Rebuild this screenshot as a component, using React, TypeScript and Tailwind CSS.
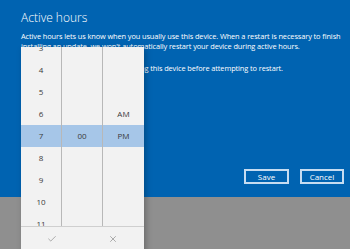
import React from 'react';
import { Check, X } from 'lucide-react';

const hours = ['3', '4', '5', '6', '7', '8', '9', '10', '11'];
const selected = 4;

const TimePicker: React.FC = () => {
    const minutes = hours.map((_, i) => (i === selected ? '00' : ''));
    const period = hours.map((_, i) => (i === selected - 1 ? 'AM' : i === selected ? 'PM' : ''));
    const columns = [hours, minutes, period];

    return (
        <div className="absolute left-[21px] top-[47px] w-[123px] bg-[#f2f2f2] shadow-[2px_2px_6px_rgba(0,0,0,0.25)] text-[8px] text-[#3a3a3a]">
            <div className="h-[179px] overflow-hidden">
                <div className="grid grid-cols-3 -mt-[10px]">
                    {columns.map((col, c) => (
                        <div key={c} className={c < 2 ? 'border-r border-[#b8b8b8]' : ''}>
                            {col.map((value, i) => (
                                <div
                                    key={i}
                                    className={`h-[22px] flex items-center justify-center ${i === selected ? 'bg-[#a6c6e8]' : ''}`}
                                >
                                    {value}
                                </div>
                            ))}
                        </div>
                    ))}
                </div>
            </div>
            <div className="grid grid-cols-2 h-[30px] border-t border-[#cfcfcf] text-[#555]">
                <div className="flex items-center justify-center pb-[6px]">
                    <Check size={10} strokeWidth={1.1} />
                </div>
                <div className="flex items-center justify-center pb-[6px]">
                    <X size={10} strokeWidth={1.1} />
                </div>
            </div>
        </div>
    );
};

const App: React.FC = () => {
    return (
        <div className="relative w-[350px] h-[249px] overflow-hidden bg-[#8f8f8f] font-['Open_Sans',sans-serif]">
            <div className="h-[197px] bg-[#0063b1] text-white pl-[21px] pr-[6px] flex flex-col">
                <h1 className="mt-[10px] text-[12px] leading-[16px] font-light">Active hours</h1>
                <p className="mt-[5px] text-[7.4px] leading-[10px] whitespace-nowrap tracking-[-0.1px]">
                    Active hours lets us know when you usually use this device. When a restart is necessary to finish
                    <br />
                    installing an update, we won't automatically restart your device during active hours.
                </p>
                <p className="mt-[12px] text-[7.4px] leading-[10px] whitespace-nowrap tracking-[-0.1px]">
                    Note: We'll check to see if you're using this device before attempting to restart.
                </p>
                <div className="mt-auto mb-[13px] flex justify-end gap-[11px] text-[8px]">
                    <button className="w-[45px] h-[15px] border-2 border-[#c6dcf1] flex items-center justify-center">Save</button>
                    <button className="w-[44px] h-[15px] border-2 border-[#c6dcf1] flex items-center justify-center">Cancel</button>
                </div>
            </div>
            <TimePicker />
        </div>
    );
};

export default App;
